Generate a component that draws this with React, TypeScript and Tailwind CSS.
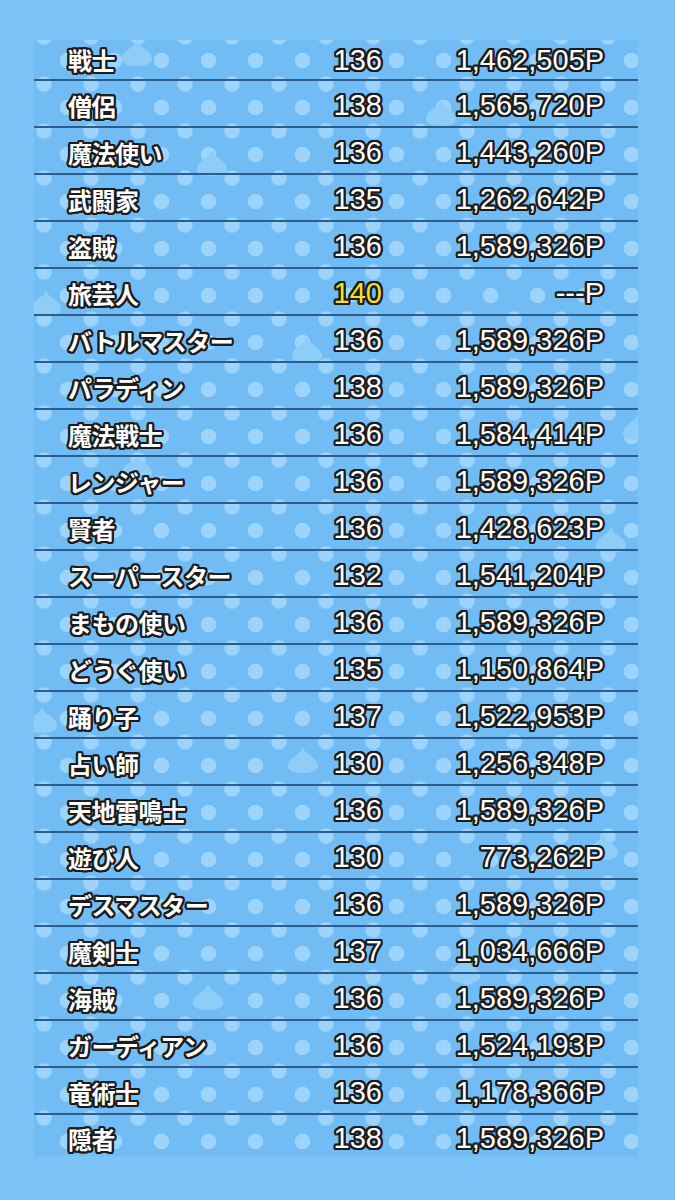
import React from 'react';

interface Job {
  name: string;
  level: number;
  points: string;
  highlight?: boolean;
}

const jobs: Job[] = [
  { name: '戦士', level: 136, points: '1,462,505P' },
  { name: '僧侶', level: 138, points: '1,565,720P' },
  { name: '魔法使い', level: 136, points: '1,443,260P' },
  { name: '武闘家', level: 135, points: '1,262,642P' },
  { name: '盗賊', level: 136, points: '1,589,326P' },
  { name: '旅芸人', level: 140, points: '---P', highlight: true },
  { name: 'バトルマスター', level: 136, points: '1,589,326P' },
  { name: 'パラディン', level: 138, points: '1,589,326P' },
  { name: '魔法戦士', level: 136, points: '1,584,414P' },
  { name: 'レンジャー', level: 136, points: '1,589,326P' },
  { name: '賢者', level: 136, points: '1,428,623P' },
  { name: 'スーパースター', level: 132, points: '1,541,204P' },
  { name: 'まもの使い', level: 136, points: '1,589,326P' },
  { name: 'どうぐ使い', level: 135, points: '1,150,864P' },
  { name: '踊り子', level: 137, points: '1,522,953P' },
  { name: '占い師', level: 130, points: '1,256,348P' },
  { name: '天地雷鳴士', level: 136, points: '1,589,326P' },
  { name: '遊び人', level: 130, points: '773,262P' },
  { name: 'デスマスター', level: 136, points: '1,589,326P' },
  { name: '魔剣士', level: 137, points: '1,034,666P' },
  { name: '海賊', level: 136, points: '1,589,326P' },
  { name: 'ガーディアン', level: 136, points: '1,524,193P' },
  { name: '竜術士', level: 136, points: '1,178,366P' },
  { name: '隠者', level: 138, points: '1,589,326P' },
];

// faint slime drops in the background pattern (panel coords)
const slimes = [
  [88, 0], [392, 60], [163, 110], [258, 297], [-3, 250], [589, 374],
  [88, 414], [562, 487], [254, 707], [-7, 667], [554, 794], [416, 917], [159, 944],
];

const Slime = ({ x, y }: { x: number; y: number }) => (
  <svg
    width="30"
    height="26"
    viewBox="0 0 30 26"
    className="absolute"
    style={{ left: x, top: y }}
  >
    <path
      d="M15 0 C16 4 19 6 23 9 C28 12 30 16 30 19 C30 23 26 26 15 26 C4 26 0 23 0 19 C0 16 2 12 7 9 C11 6 14 4 15 0 Z"
      fill="#8fcdf9"
    />
  </svg>
);

const outline =
  '[text-shadow:-2.2px_0_0_#1c1c1c,2.2px_0_0_#1c1c1c,0_-2.2px_0_#1c1c1c,0_2.2px_0_#1c1c1c,-1.6px_-1.6px_0_#1c1c1c,1.6px_-1.6px_0_#1c1c1c,-1.6px_1.6px_0_#1c1c1c,1.6px_1.6px_0_#1c1c1c,-2px_-1px_0_#1c1c1c,2px_-1px_0_#1c1c1c,-2px_1px_0_#1c1c1c,2px_1px_0_#1c1c1c,-1px_-2px_0_#1c1c1c,1px_-2px_0_#1c1c1c,-1px_2px_0_#1c1c1c,1px_2px_0_#1c1c1c]';

const App = () => {
  return (
    <div className="w-[675px] h-[1200px] bg-[#7bc2f7] pt-[40px] pl-[34px]">
      {/* Job list panel */}
      <div className="relative w-[604px] bg-[#71bcf4] bg-[radial-gradient(circle,#9ed3fb_7.5px,transparent_8px),radial-gradient(circle,#9ed3fb_7.5px,transparent_8px)] bg-[length:47px_47px] bg-[position:-13.5px_-26.5px,10px_-3px]">
        <div className="absolute inset-0 overflow-hidden">
          {slimes.map(([x, y], i) => (
            <Slime key={i} x={x} y={y} />
          ))}
        </div>

        <div className="relative">
          {jobs.map((job, index) => {
            const first = index === 0;
            const last = index === jobs.length - 1;
            return (
              <div
                key={job.name}
                className={`flex items-center text-white ${
                  first ? 'h-[41px] pt-[1px]' : last ? 'h-[41px] pt-[6px]' : 'h-[47px] pt-[4px]'
                } ${last ? '' : 'border-b-2 border-[#2b5e8d]'}`}
              >
                <div
                  className={`w-[284px] pl-[34px] text-[24px] font-bold tracking-[-0.5px] [font-family:'Noto_Sans_CJK_JP',sans-serif] ${outline}`}
                >
                  {job.name}
                </div>
                <div
                  className={`w-[64px] text-right text-[29px] leading-none [font-family:'Liberation_Sans',sans-serif] ${outline} ${
                    job.highlight ? 'text-[#f6df22]' : ''
                  }`}
                >
                  {job.level}
                </div>
                <div
                  className={`flex-1 pr-[34px] text-right text-[29px] leading-none [font-family:'Liberation_Sans',sans-serif] ${outline}`}
                >
                  {job.points}
                </div>
              </div>
            );
          })}
        </div>
      </div>
    </div>
  );
};

export default App;
